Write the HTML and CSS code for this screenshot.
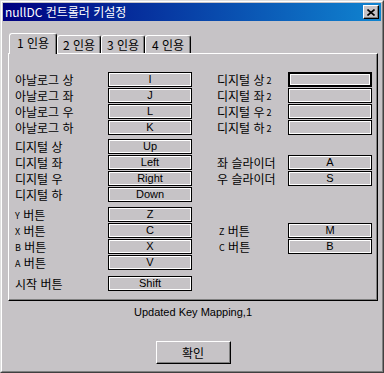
FILE: index.html
```html
<!DOCTYPE html>
<html lang="ko">
<head>
    <meta charset="UTF-8">
    <title>nullDC 컨트롤러 키설정</title>
    <link rel="stylesheet" href="styles.css">
</head>
<body>

    <div class="window">
        <div class="frame">
            <!-- Title bar -->
            <div class="titlebar">
                <span class="title">nullDC 컨트롤러 키설정</span>
                <button class="close">
                    <svg width="8" height="7" viewBox="0 0 8 7">
                        <path d="M0.5 0.5 L7.5 6.5 M7.5 0.5 L0.5 6.5" stroke="#000" stroke-width="1.6" fill="none"/>
                    </svg>
                </button>
            </div>

            <div class="client">
                <!-- Player tabs -->
                <div class="tabs">
                    <div class="tab active">1 인용</div>
                    <div class="tab">2 인용</div>
                    <div class="tab">3 인용</div>
                    <div class="tab wide">4 인용</div>
                </div>

                <div class="panel">
                    <!-- Analog stick -->
                    <div class="group">
                        <span class="lbl">아날로그 상</span><span class="key">I</span>
                        <span class="rlbl">디지털 상<small>2</small></span><span class="key focus"></span>
                        <span class="lbl">아날로그 좌</span><span class="key">J</span>
                        <span class="rlbl">디지털 좌<small>2</small></span><span class="key"></span>
                        <span class="lbl">아날로그 우</span><span class="key">L</span>
                        <span class="rlbl">디지털 우<small>2</small></span><span class="key"></span>
                        <span class="lbl">아날로그 하</span><span class="key">K</span>
                        <span class="rlbl">디지털 하<small>2</small></span><span class="key"></span>
                    </div>

                    <!-- D-pad and sliders -->
                    <div class="group g2">
                        <span class="lbl">디지털 상</span><span class="key">Up</span>
                        <span class="lbl">디지털 좌</span><span class="key">Left</span>
                        <span class="rlbl">좌 슬라이더</span><span class="key">A</span>
                        <span class="lbl">디지털 우</span><span class="key">Right</span>
                        <span class="rlbl">우 슬라이더</span><span class="key">S</span>
                        <span class="lbl">디지털 하</span><span class="key">Down</span>
                    </div>

                    <!-- Face buttons -->
                    <div class="group g3">
                        <span class="lbl"><small>Y</small> 버튼</span><span class="key">Z</span>
                        <span class="lbl"><small>X</small> 버튼</span><span class="key">C</span>
                        <span class="rlbl"><small>Z</small> 버튼</span><span class="key">M</span>
                        <span class="lbl"><small>B</small> 버튼</span><span class="key">X</span>
                        <span class="rlbl"><small>C</small> 버튼</span><span class="key">B</span>
                        <span class="lbl"><small>A</small> 버튼</span><span class="key">V</span>
                    </div>

                    <div class="group g4">
                        <span class="lbl">시작 버튼</span><span class="key">Shift</span>
                    </div>
                </div>

                <p class="status">Updated Key Mapping,1</p>

                <div class="actions">
                    <button class="ok">확인</button>
                </div>
            </div>
        </div>
    </div>

</body>
</html>
```

FILE: styles.css
```css
/* General styles */
body {
    margin: 0;
    background: #c6c3c6;
    font-family: "Noto Sans CJK KR", sans-serif;
    font-size: 12px;
    color: #000;
}

/* Window frame */
.window {
    width: 384px;
    height: 373px;
    box-sizing: border-box;
    border: 1px solid;
    border-color: #dfdfdf #404040 #404040 #dfdfdf;
    background: #c6c3c6;
}

.frame {
    height: 100%;
    box-sizing: border-box;
    border: 1px solid;
    border-color: #fff #808080 #808080 #fff;
    padding: 1px;
}

.titlebar {
    height: 18px;
    display: flex;
    align-items: center;
    justify-content: space-between;
    padding: 0 2px;
    background: linear-gradient(to right, #000080, #1084d0);
    color: #fff;
}

.title {
    line-height: 18px;
    white-space: nowrap;
}

.close {
    width: 16px;
    height: 14px;
    padding: 0;
    display: flex;
    align-items: center;
    justify-content: center;
    background: #c6c3c6;
    border: 1px solid;
    border-color: #fff #000 #000 #fff;
    box-shadow: inset -1px -1px #808080;
}

/* Client area */
.client {
    padding: 12px 3px 0 5px;
}

.tabs {
    display: flex;
    align-items: flex-end;
    height: 20px;
    padding-left: 1px;
    position: relative;
    z-index: 1;
}

.tab {
    width: 44px;
    height: 18px;
    box-sizing: border-box;
    border-top: 1px solid #fff;
    border-left: 1px solid #fff;
    border-right: 1px solid #000;
    box-shadow: inset -1px 0 #808080;
    border-radius: 3px 3px 0 0;
    background: #c6c3c6;
    text-align: center;
    line-height: 17px;
    white-space: nowrap;
}

.tab.wide {
    width: 46px;
}

.tab.active {
    width: 48px;
    height: 21px;
    margin-bottom: -1px;
    line-height: 17px;
}

.panel {
    border: 1px solid;
    border-color: #fff #000 #000 #fff;
    box-shadow: inset -1px -1px #808080;
    padding: 18px 0 9px 6px;
}

/* Key rows */
.group {
    display: grid;
    grid-template-columns: 93px 84px 25px 71px 84px;
    grid-auto-rows: 15px;
    row-gap: 1px;
}

.g2 {
    margin-top: 4px;
}

.g3 {
    margin-top: 5px;
}

.g4 {
    margin-top: 6px;
}

.lbl,
.rlbl {
    line-height: 15px;
    white-space: nowrap;
}

.lbl {
    grid-column: 1;
}

.rlbl {
    grid-column: 4;
}

.lbl small,
.rlbl small {
    font-size: 9px;
    vertical-align: 1px;
}

.rlbl small:last-child {
    margin-left: 2px;
}

.key {
    border: 1px solid #000;
    box-shadow: inset 0 0 0 1px #fff;
    text-align: center;
    font-family: "Liberation Sans", sans-serif;
    font-size: 11px;
    line-height: 13px;
}

.key.focus {
    box-shadow: inset 0 0 0 1px #000, inset 0 0 0 2px #fff;
}

/* Footer */
.status {
    margin: 4px 0 0;
    text-align: center;
    font-family: "Liberation Sans", sans-serif;
    font-size: 11px;
    line-height: 14px;
}

.actions {
    margin-top: 22px;
    text-align: center;
}

.ok {
    width: 75px;
    height: 23px;
    padding: 0;
    background: #c6c3c6;
    border: 1px solid;
    border-color: #fff #000 #000 #fff;
    box-shadow: inset -1px -1px #808080;
    font-family: "Noto Sans CJK KR", sans-serif;
    font-size: 12px;
    color: #000;
}
```
